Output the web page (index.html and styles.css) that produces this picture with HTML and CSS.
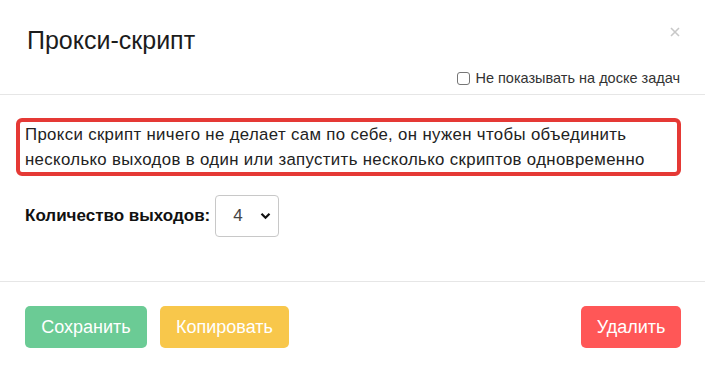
FILE: index.html
```
<!DOCTYPE html>
<html lang="ru">
<head>
    <meta charset="UTF-8">
    <title>Прокси-скрипт</title>
    <link rel="stylesheet" href="styles.css">
</head>
<body>
    <div class="modal">
        <div class="modal-header">
            <div class="header-top">
                <h4 class="modal-title">Прокси-скрипт</h4>
                <button class="close">
                    <svg width="10" height="10" viewBox="0 0 10 10"><path d="M1 1 L9 9 M9 1 L1 9" stroke="#c8c8c8" stroke-width="1.6"/></svg>
                </button>
            </div>
            <label class="hide-board">
                <input type="checkbox">
                <span>Не показывать на доске задач</span>
            </label>
        </div>

        <div class="modal-body">
            <div class="note">
                Прокси скрипт ничего не делает сам по себе, он нужен чтобы объединить
                несколько выходов в один или запустить несколько скриптов одновременно
            </div>
            <div class="outputs">
                <span class="outputs-label">Количество выходов:</span>
                <div class="select">
                    <span>4</span>
                    <svg width="11" height="8" viewBox="0 0 11 8"><path d="M1.5 1.8 L5.5 5.8 L9.5 1.8" fill="none" stroke="#111" stroke-width="2.2"/></svg>
                </div>
            </div>
        </div>

        <div class="modal-footer">
            <button class="btn btn-save">Сохранить</button>
            <button class="btn btn-copy">Копировать</button>
            <button class="btn btn-delete">Удалить</button>
        </div>
    </div>
</body>
</html>
```

FILE: styles.css
```
body {
    margin: 0;
    background: #ffffff;
    font-family: 'Liberation Sans', 'Arial', sans-serif;
    color: #222;
}

.modal {
    width: 705px;
    height: 368px;
    background: #fff;
}

.modal-header {
    padding: 25px 25px 6px 27px;
    border-bottom: 1px solid #e6e6e6;
}

.header-top {
    display: flex;
    justify-content: space-between;
    align-items: flex-start;
}

.modal-title {
    margin: 0;
    font-size: 25px;
    font-weight: 400;
    line-height: 30px;
    color: #1c1c1c;
}

.close {
    border: none;
    background: none;
    padding: 0;
    margin-top: 2px;
    display: flex;
}

.hide-board {
    display: flex;
    justify-content: flex-end;
    align-items: center;
    gap: 5px;
    margin-top: 13px;
    font-size: 14.5px;
    line-height: 20px;
    color: #333;
}

.hide-board input {
    appearance: none;
    width: 13px;
    height: 13px;
    margin: 0;
    border: 1px solid #767676;
    border-radius: 3px;
    box-sizing: border-box;
}

.modal-body {
    padding: 23px 24px 0 16px;
    height: 163px;
    border-bottom: 1px solid #e6e6e6;
}

.note {
    border: 4px solid #e53935;
    border-radius: 6px;
    padding: 0 2px 0 5px;
    font-size: 16.8px;
    line-height: 25px;
    letter-spacing: 0.35px;
    color: #222;
}

.outputs {
    display: flex;
    align-items: center;
    gap: 5px;
    margin-top: 19px;
    padding-left: 9px;
}

.outputs-label {
    font-size: 17px;
    font-weight: 700;
    color: #111;
}

.select {
    display: flex;
    align-items: center;
    justify-content: space-between;
    width: 64px;
    height: 42px;
    box-sizing: border-box;
    border: 1px solid #c8c8c8;
    border-radius: 4px;
    padding: 0 7px 0 17px;
    font-size: 17px;
    font-weight: 300;
    color: #444;
}

.modal-footer {
    display: flex;
    gap: 13px;
    padding: 24px 24px 0 25px;
}

.btn {
    height: 42px;
    border: none;
    border-radius: 5px;
    color: #fff;
    font-family: 'Liberation Sans', 'Arial', sans-serif;
    font-size: 18px;
    padding: 0;
}

.btn-save {
    background: #6bcb95;
    width: 122px;
}

.btn-copy {
    background: #f8c74b;
    width: 129px;
}

.btn-delete {
    background: #ff5757;
    width: 100px;
    margin-left: auto;
}
```
